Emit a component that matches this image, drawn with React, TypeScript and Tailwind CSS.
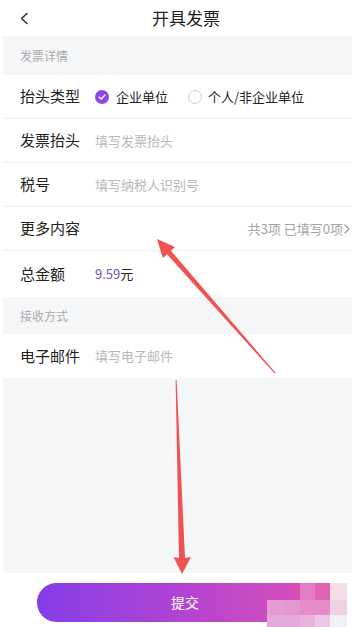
import React from 'react';

const font = { fontFamily: '"Noto Sans CJK SC", "Noto Sans", sans-serif' };

interface RowProps {
  label: string;
  children?: React.ReactNode;
  border?: boolean;
}

const Row: React.FC<RowProps> = ({ label, children, border = true }) => (
  <div className={`flex items-center h-[44px] bg-white ${border ? 'border-b border-[#efeff1]' : ''}`}>
    <div className="w-[92px] pl-[17px] shrink-0 text-[15px] text-[#222] whitespace-nowrap">{label}</div>
    <div className="flex-1 flex items-center min-w-0">{children}</div>
  </div>
);

const SectionTitle: React.FC<{ title: string; h: string }> = ({ title, h }) => (
  <div className={`flex items-center pl-[17px] bg-[#f5f6f8] text-[12px] text-[#a9a9ab] ${h}`}>{title}</div>
);

const Placeholder: React.FC<{ text: string }> = ({ text }) => (
  <span className="text-[13px] text-[#b8b8ba]">{text}</span>
);

const App: React.FC = () => {
  return (
    <div className="relative w-[352px] h-[627px] overflow-hidden bg-white" style={font}>
      <div className="ml-[3px] w-[366px] flex flex-col h-full">
        {/* header */}
        <div className="relative h-[36px] flex items-center justify-center bg-white shrink-0">
          <svg className="absolute left-[16px] top-[12px]" width="10" height="13" viewBox="0 0 10 13">
            <path d="M8 1.5 L2.5 6.5 L8 11.5" fill="none" stroke="#333" strokeWidth="1.6" strokeLinecap="round" strokeLinejoin="round" />
          </svg>
          <span className="text-[17px] text-[#222]">开具发票</span>
        </div>

        <SectionTitle title="发票详情" h="h-[39px]" />

        <Row label="抬头类型">
          <div className="flex items-center">
            <span className="w-[14px] h-[14px] rounded-full bg-[#8b48e6] flex items-center justify-center">
              <svg width="8" height="6" viewBox="0 0 8 6">
                <path d="M1 3 L3.2 5 L7 1" fill="none" stroke="#fff" strokeWidth="1.3" strokeLinecap="round" strokeLinejoin="round" />
              </svg>
            </span>
            <span className="ml-[7px] text-[13px] text-[#222]">企业单位</span>
          </div>
          <div className="flex items-center ml-[20px]">
            <span className="w-[14px] h-[14px] rounded-full border border-[#cfcfd2] bg-white" />
            <span className="ml-[6px] text-[13px] text-[#222]">个人/非企业单位</span>
          </div>
        </Row>
        <Row label="发票抬头">
          <Placeholder text="填写发票抬头" />
        </Row>
        <Row label="税号">
          <Placeholder text="填写纳税人识别号" />
        </Row>
        <Row label="更多内容">
          <div className="ml-auto flex items-center pr-[19px]">
            <span className="text-[13px] text-[#a3a3a5]">共3项 已填写0项</span>
            <svg className="ml-[1px]" width="6" height="10" viewBox="0 0 6 10">
              <path d="M1 1 L5 5 L1 9" fill="none" stroke="#999" strokeWidth="1.2" strokeLinecap="round" strokeLinejoin="round" />
            </svg>
          </div>
        </Row>
        <div className="flex items-center h-[46px] bg-white">
          <div className="w-[92px] pl-[17px] shrink-0 text-[15px] text-[#222]">总金额</div>
          <span className="text-[13px] text-[#7451c4]">9.59</span>
          <span className="text-[13px] text-[#222]">元</span>
        </div>

        <SectionTitle title="接收方式" h="h-[37px]" />

        <Row label="电子邮件" border={false}>
          <Placeholder text="填写电子邮件" />
        </Row>

        <div className="flex-1 bg-[#f5f6f8]" />

        <div className="h-[54px] shrink-0 bg-white pt-[10px]">
          <button className="ml-[34px] w-[296px] h-[39px] rounded-full bg-gradient-to-r from-[#853ce9] via-[#b343d2] to-[#e04fb0] text-white text-[14px]">
            提交
          </button>
        </div>
      </div>

      {/* mosaic blur over corner */}
      <div className="absolute left-[267px] top-[583px] w-[80px] h-[44px] grid grid-cols-[16px_17px_15px_15px_17px] grid-rows-[17px_15px_12px]">
        <div />
        <div />
        <div className="bg-[#e27cc4]" />
        <div className="bg-[#e162b2]" />
        <div className="bg-[#f4dde9]" />
        <div className="bg-[#e59ad2]" />
        <div className="bg-[#e597d0]" />
        <div className="bg-[#e68cc6]" />
        <div className="bg-[#e68cc6]" />
        <div className="bg-[#eed2e4]" />
        <div className="bg-[#e3a8dc]" />
        <div className="bg-[#e3a8dc]" />
        <div className="bg-[#e8b2dd]" />
        <div className="bg-[#edc6e5]" />
        <div className="bg-[#f3f0f5]" />
      </div>

      {/* annotation arrows */}
      <svg className="absolute left-0 top-0 pointer-events-none" width="352" height="627" viewBox="0 0 352 627">
        <polygon
          points="157,239 175,247 171,250.8 275.6,373 274.6,373.6 167,254.2 162.9,258"
          fill="#f05252"
        />
        <polygon points="182,574 191,557 185,558 176.6,380 175.6,380 179,558 173.5,557" fill="#f05252" />
      </svg>
    </div>
  );
};

export default App;
